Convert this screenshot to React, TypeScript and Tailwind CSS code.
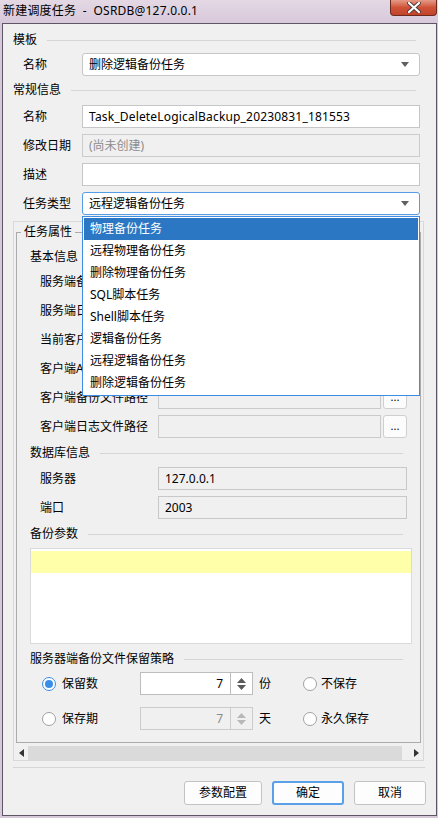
import React from "react";

const font = "font-[Noto_Sans,Noto_Sans_CJK_SC,sans-serif]";

function Header({ title, right = 20 }: { title: string; right?: number }) {
  return (
    <div className={`flex items-center h-[16px] ${right === 20 ? "pr-[20px]" : "pr-[17px]"}`}>
      <span className="leading-[16px] whitespace-nowrap">{title}</span>
      <div className="ml-[10px] h-px flex-1 bg-[#d5d5d5]" />
    </div>
  );
}

function Arrow() {
  return (
    <svg width="8" height="5" viewBox="0 0 8 5" className="shrink-0">
      <path d="M0 0H8L4 5Z" fill="#606060" />
    </svg>
  );
}

function Combo({ value, focused }: { value: string; focused?: boolean }) {
  return (
    <div
      className={`w-[338px] h-[23px] flex items-center justify-between pl-[6px] pr-[10px] bg-white rounded-[3px] border ${
        focused ? "border-[#569de5]" : "border-[#c6c6c6]"
      }`}
    >
      <span className="leading-[16px]">{value}</span>
      <Arrow />
    </div>
  );
}

function FormRow({ label, children }: { label: string; children: React.ReactNode }) {
  return (
    <div className="flex items-center pl-[20px]">
      <span className="w-[59px] leading-[16px] whitespace-nowrap">{label}</span>
      {children}
    </div>
  );
}

function PathRow({ label }: { label: string }) {
  return (
    <div className="flex items-center h-[23px] pl-[23px]">
      <span className="w-[118px] leading-[16px] whitespace-nowrap">{label}</span>
      <div className="w-[223px] h-[23px] bg-[#f0f0f0] border border-[#cacaca]" />
      <div className="ml-[2px] w-[24px] h-[23px] rounded-[3px] border border-[#cfcfcf] bg-[#fcfcfc] flex items-center justify-center text-[11px] leading-none pb-[3px]">
        ...
      </div>
    </div>
  );
}

function InfoRow({ label, value }: { label: string; value: string }) {
  return (
    <div className="flex items-center h-[23px] pl-[23px]">
      <span className="w-[118px] leading-[16px]">{label}</span>
      <div className="w-[249px] h-[23px] bg-[#f0f0f0] border border-[#c8c8c8] flex items-center pl-[6px] leading-[16px]">
        {value}
      </div>
    </div>
  );
}

function Radio({ checked }: { checked?: boolean }) {
  return (
    <div
      className={`w-[14px] h-[14px] rounded-full border flex items-center justify-center bg-white ${
        checked ? "border-[#3a8ee6]" : "border-[#a2a2a2]"
      }`}
    >
      {checked && <div className="w-[8px] h-[8px] rounded-full bg-[#3a8ee6]" />}
    </div>
  );
}

function Spin({ disabled }: { disabled?: boolean }) {
  const c = disabled ? "#b8b8b8" : "#5a5a5a";
  return (
    <div
      className={`w-[113px] h-[23px] flex border ${
        disabled ? "bg-[#f0f0f0] border-[#cccccc] text-[#8a8a8a]" : "bg-white border-[#bdbdbd]"
      }`}
    >
      <div className="flex-1 flex items-center justify-end pr-[7px] leading-[16px]">7</div>
      <div
        className={`w-[22px] flex flex-col items-center justify-center gap-[2px] border-l ${
          disabled ? "border-[#cccccc]" : "border-[#bdbdbd]"
        }`}
      >
        <svg width="9" height="5" viewBox="0 0 9 5">
          <path d="M0 5L4.5 0L9 5Z" fill={c} />
        </svg>
        <svg width="9" height="5" viewBox="0 0 9 5">
          <path d="M0 0H9L4.5 5Z" fill={c} />
        </svg>
      </div>
    </div>
  );
}

function RadioRow({
  a,
  aChecked,
  unit,
  b,
  disabled,
}: {
  a: string;
  aChecked?: boolean;
  unit: string;
  b: string;
  disabled?: boolean;
}) {
  return (
    <div className="flex items-center h-[23px] pl-[25px]">
      <div className="w-[98px] flex items-center gap-[6px]">
        <Radio checked={aChecked} />
        <span className="leading-[16px]">{a}</span>
      </div>
      <Spin disabled={disabled} />
      <span className="ml-[6px] w-[44px] leading-[16px]">{unit}</span>
      <div className="flex items-center gap-[4px]">
        <Radio />
        <span className="leading-[16px]">{b}</span>
      </div>
    </div>
  );
}

function Button({ label, primary, w }: { label: string; primary?: boolean; w: string }) {
  return (
    <div
      className={`${w} h-[24px] rounded-[3px] bg-[#fdfdfd] flex items-center justify-center leading-[16px] ${
        primary ? "border-2 border-[#5aa0e8]" : "border border-[#c2c2c2]"
      }`}
    >
      {label}
    </div>
  );
}

const taskTypes = [
  "物理备份任务",
  "远程物理备份任务",
  "删除物理备份任务",
  "SQL脚本任务",
  "Shell脚本任务",
  "逻辑备份任务",
  "远程逻辑备份任务",
  "删除逻辑备份任务",
];

export default function App() {
  return (
    <div className={`relative w-[438px] h-[818px] overflow-hidden bg-[#d7c8d9] text-[12px] text-black ${font}`}>
      {/* title bar */}
      <div className="h-[23px] flex items-start justify-between bg-linear-to-b from-[#e4d8e4] to-[#d8c9da]">
        <span className="pl-[3px] pt-[3px] leading-[16px] whitespace-pre tracking-[0.2px]">新建调度任务  -  OSRDB@127.0.0.1</span>
        <div className="mr-[1px] w-[47px] h-[16px] rounded-b-[4px] border border-t-0 border-[#6b2a20] bg-linear-to-b from-[#e49a86] via-[#cf5237] to-[#c2432a] flex items-center justify-center">
          <svg width="14" height="11" viewBox="0 0 14 11">
            <path d="M2 1L12 10M12 1L2 10" stroke="#4a3b3b" strokeWidth="4" strokeLinecap="round" />
            <path d="M2 1L12 10M12 1L2 10" stroke="#ffffff" strokeWidth="2.2" strokeLinecap="round" />
          </svg>
        </div>
      </div>

      {/* window */}
      <div className="ml-[2px] w-[435px] h-[793px] border border-[#5e5664] bg-[#f0f0f0] flex flex-col">
        <div className="pt-[8px] pl-[10px]">
          <Header title="模板" />
        </div>
        <div className="mt-[5px]">
          <FormRow label="名称">
            <Combo value="删除逻辑备份任务" />
          </FormRow>
        </div>
        <div className="mt-[6px] pl-[10px]">
          <Header title="常规信息" />
        </div>
        <div className="mt-[7px] flex flex-col gap-[6px]">
          <FormRow label="名称">
            <div className="w-[338px] h-[23px] bg-white border border-[#c6c6c6] flex items-center pl-[6px] leading-[16px] tracking-[0.17px]">
              Task_DeleteLogicalBackup_20230831_181553
            </div>
          </FormRow>
          <FormRow label="修改日期">
            <div className="w-[338px] h-[23px] bg-[#f0f0f0] border border-[#cccccc] flex items-center pl-[6px] leading-[16px] text-[#8c8c8c]">
              (尚未创建)
            </div>
          </FormRow>
          <FormRow label="描述">
            <div className="w-[338px] h-[23px] bg-white border border-[#c6c6c6]" />
          </FormRow>
          <FormRow label="任务类型">
            <Combo value="远程逻辑备份任务" focused />
          </FormRow>
        </div>

        {/* scroll area */}
        <div className="mt-[6px] ml-[10px] w-[411px] h-[540px] border border-[#d9d9d9] flex flex-col overflow-hidden">
          <fieldset className="mt-[2px] ml-[2px] w-[405px] h-[519px] border border-[#ababab] shrink-0">
            <legend className="ml-[4px] px-[3px] leading-[16px]">任务属性</legend>
            <div className="mt-[9px] pl-[13px]">
              <Header title="基本信息" right={17} />
            </div>
            <div className="mt-[5px] flex flex-col gap-[6px]">
              <PathRow label="服务端备份文件路径" />
              <PathRow label="服务端日志文件路径" />
              <PathRow label="当前客户端IP" />
              <PathRow label="客户端Agent端口" />
              <PathRow label="客户端备份文件路径" />
              <PathRow label="客户端日志文件路径" />
            </div>
            <div className="mt-[7px] pl-[13px]">
              <Header title="数据库信息" right={17} />
            </div>
            <div className="mt-[6px] flex flex-col gap-[6px]">
              <InfoRow label="服务器" value="127.0.0.1" />
              <InfoRow label="端口" value="2003" />
            </div>
            <div className="mt-[7px] pl-[13px]">
              <Header title="备份参数" right={17} />
            </div>
            <div className="mt-[6px] ml-[13px] w-[382px] h-[96px] border border-[#dadada] bg-white pt-[2px]">
              <div className="h-[22px] bg-[#ffffaa]" />
            </div>
            <div className="mt-[7px] pl-[13px]">
              <Header title="服务器端备份文件保留策略" right={17} />
            </div>
            <div className="mt-[5px]">
              <RadioRow a="保留数" aChecked unit="份" b="不保存" />
            </div>
            <div className="mt-[12px]">
              <RadioRow a="保存期" unit="天" b="永久保存" disabled />
            </div>
          </fieldset>
          <div className="mt-[3px] h-[14px] flex items-center">
            <div className="w-[14px] flex justify-center">
              <svg width="5" height="8" viewBox="0 0 5 8">
                <path d="M5 0V8L0 4Z" fill="#333" />
              </svg>
            </div>
            <div className="w-[374px] h-full bg-[#dadada]" />
            <div className="flex-1" />
            <div className="w-[14px] flex justify-center">
              <svg width="5" height="8" viewBox="0 0 5 8">
                <path d="M0 0V8L5 4Z" fill="#333" />
              </svg>
            </div>
          </div>
        </div>

        <div className="mt-[6px] ml-[10px] w-[412px] h-px bg-[#d5d5d5]" />

        <div className="mt-[13px] flex justify-end gap-[10px] pr-[10px]">
          <Button label="参数配置" w="w-[78px]" />
          <Button label="确定" primary w="w-[72px]" />
          <Button label="取消" w="w-[72px]" />
        </div>
      </div>

      {/* open dropdown of 任务类型 */}
      <div className="absolute left-[82px] top-[216px] w-[338px] border border-[#3d8de4] bg-white py-[1px]">
        {taskTypes.map((t, i) => (
          <div
            key={t}
            className={`h-[22px] flex items-center pl-[6px] mx-[1px] leading-[16px] ${
              i === 0 ? "bg-[#2b77c4] text-white" : ""
            }`}
          >
            {t}
          </div>
        ))}
      </div>
    </div>
  );
}
